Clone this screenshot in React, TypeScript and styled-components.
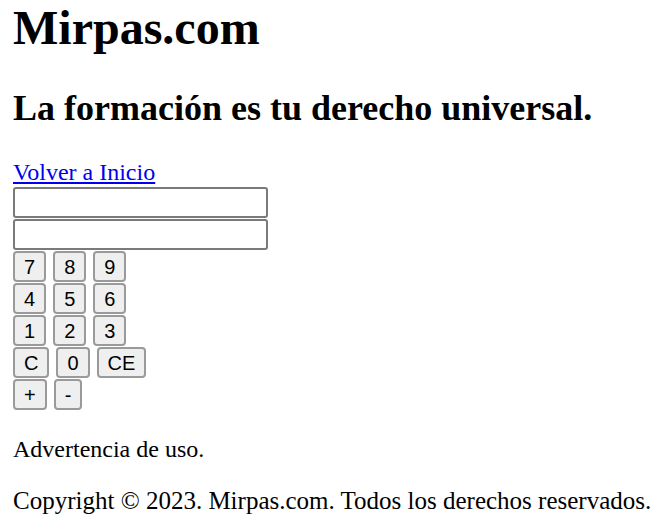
import React from "react";
import styled, { createGlobalStyle } from "styled-components";

const Global = createGlobalStyle`
  html { background: #ffffff; overflow: hidden; }
  body {
    margin: 0;
    font-family: "Liberation Serif", "Times New Roman", serif;
    font-size: 24px;
    color: #000000;
  }
`;

const Page = styled.main`
  display: block;
  padding: 0 0 0 13px;
`;

const Title = styled.h1`
  margin: 0 0 32px;
  font-size: 48px;
  font-weight: bold;
  line-height: normal;
`;

const Subtitle = styled.h2`
  margin: 0 0 30px;
  font-size: 36px;
  font-weight: bold;
  line-height: normal;
`;

const Nav = styled.div`
  line-height: normal;
`;

const HomeLink = styled.a`
  color: #0000ee;
  text-decoration: underline;
`;

const Calculator = styled.form`
  display: flex;
  flex-direction: column;
  align-items: flex-start;
  gap: 1px;
  margin: 1px 0 0;
`;

const Display = styled.input`
  box-sizing: border-box;
  width: 255px;
  height: 31px;
  margin: 0;
  padding: 2px 3px;
  border: 2px solid #7a7a7a;
  border-radius: 3px;
  background: #ffffff;
  font-family: "Liberation Sans", Arial, sans-serif;
  font-size: 20px;
  outline: none;
`;

const KeyRow = styled.div`
  display: flex;
  gap: 7px;
`;

const Key = styled.button`
  box-sizing: border-box;
  height: 31px;
  margin: 0;
  padding: 0 9px;
  border: 2px solid #9a9a9a;
  border-radius: 4px;
  background: #efefef;
  color: #000000;
  font-family: "Liberation Sans", Arial, sans-serif;
  font-size: 20px;
  line-height: 1;
  cursor: pointer;
`;

const Notice = styled.p`
  margin: 26px 0 24px;
  line-height: normal;
`;

const Footer = styled.p`
  margin: 24px 0 0;
  font-size: 25px;
  line-height: normal;
  white-space: nowrap;
`;

const rows: string[][] = [
  ["7", "8", "9"],
  ["4", "5", "6"],
  ["1", "2", "3"],
  ["C", "0", "CE"],
  ["+", "-"],
];

export default function App() {
  return (
    <Page>
      <Global />
      <Title>Mirpas.com</Title>
      <Subtitle>La formación es tu derecho universal.</Subtitle>
      <Nav>
        <HomeLink href="#">Volver a Inicio</HomeLink>
      </Nav>
      <Calculator onSubmit={(e) => e.preventDefault()}>
        <Display type="text" />
        <Display type="text" />
        {rows.map((row, i) => (
          <KeyRow key={i}>
            {row.map((k) => (
              <Key type="button" key={k}>
                {k}
              </Key>
            ))}
          </KeyRow>
        ))}
      </Calculator>
      <Notice>Advertencia de uso.</Notice>
      <Footer>Copyright © 2023. Mirpas.com. Todos los derechos reservados.</Footer>
    </Page>
  );
}
